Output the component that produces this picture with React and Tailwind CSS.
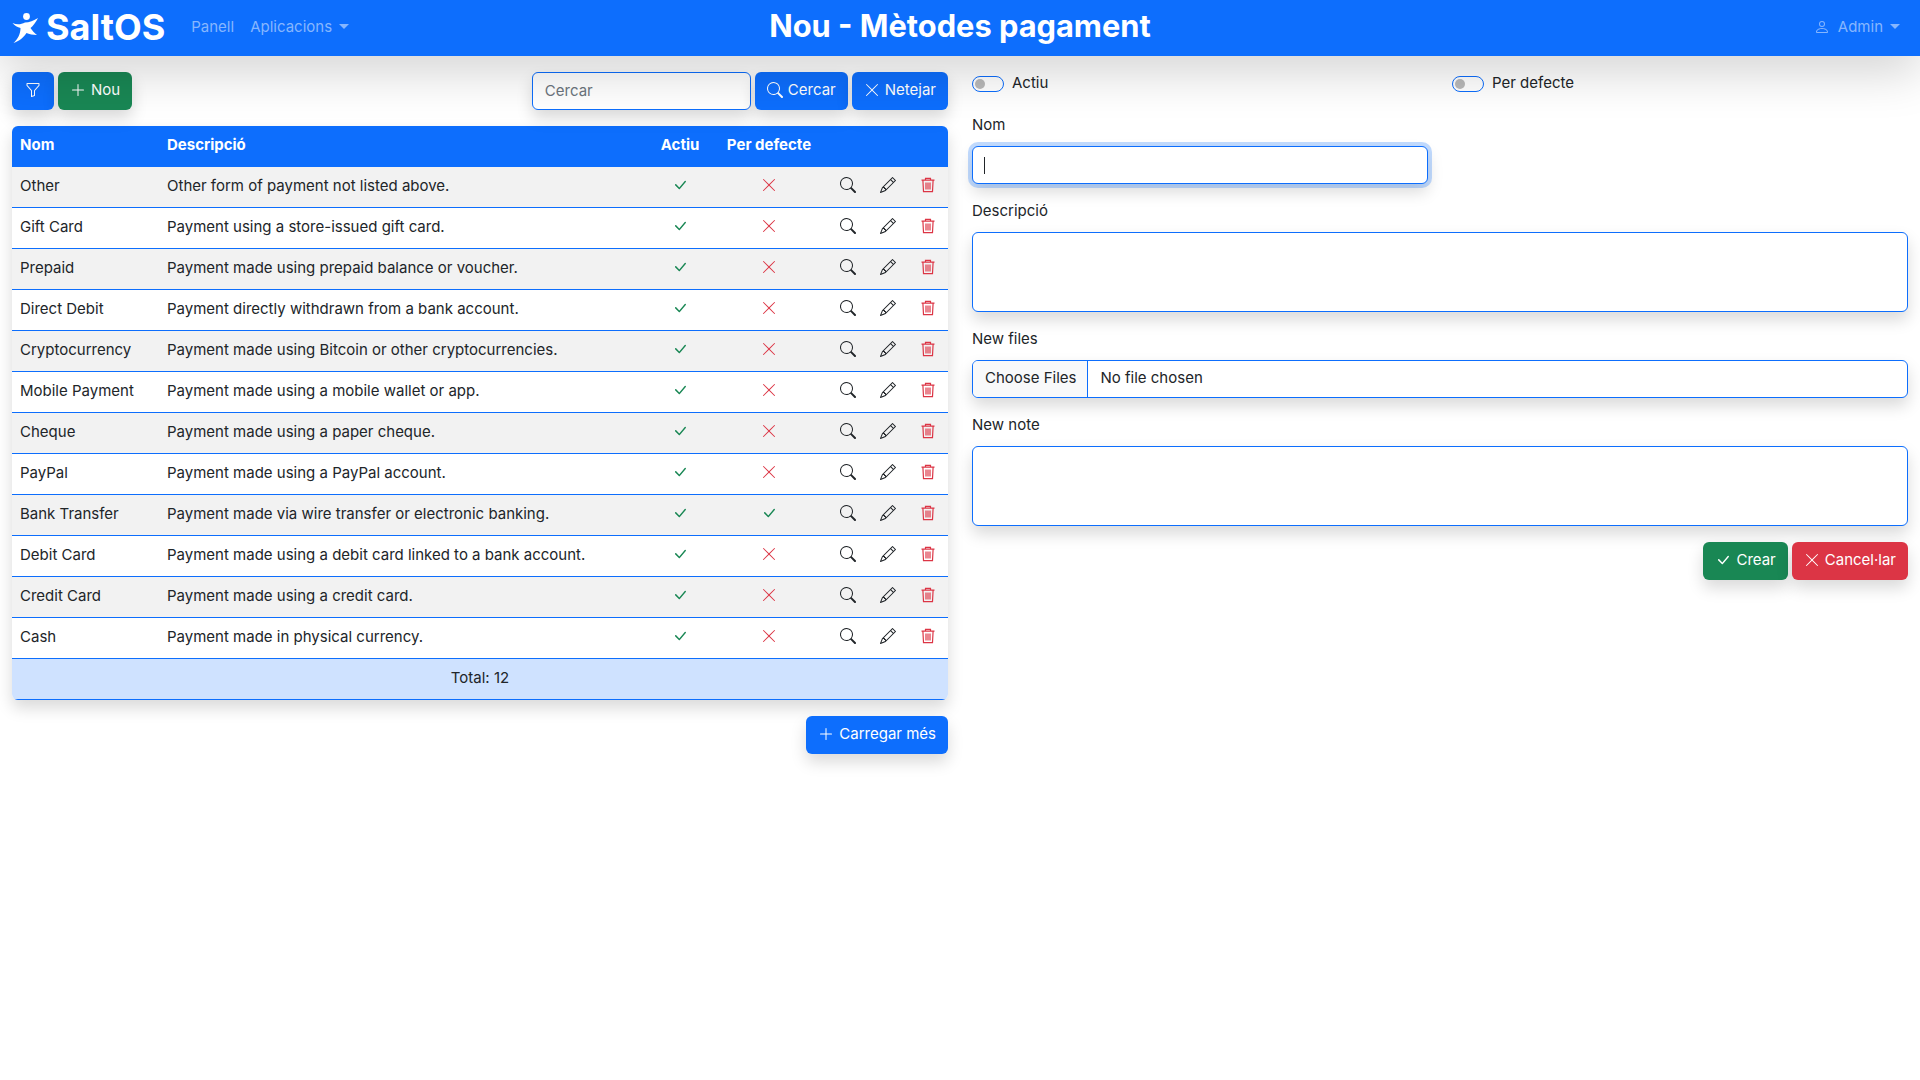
import React from 'react';
import { BsFunnel, BsPlusLg, BsSearch, BsXLg, BsCheckLg, BsPencil, BsPerson } from 'react-icons/bs';

const rows = [
  ['Other', 'Other form of payment not listed above.', false],
  ['Gift Card', 'Payment using a store-issued gift card.', false],
  ['Prepaid', 'Payment made using prepaid balance or voucher.', false],
  ['Direct Debit', 'Payment directly withdrawn from a bank account.', false],
  ['Cryptocurrency', 'Payment made using Bitcoin or other cryptocurrencies.', false],
  ['Mobile Payment', 'Payment made using a mobile wallet or app.', false],
  ['Cheque', 'Payment made using a paper cheque.', false],
  ['PayPal', 'Payment made using a PayPal account.', false],
  ['Bank Transfer', 'Payment made via wire transfer or electronic banking.', true],
  ['Debit Card', 'Payment made using a debit card linked to a bank account.', false],
  ['Credit Card', 'Payment made using a credit card.', false],
  ['Cash', 'Payment made in physical currency.', false],
];

const shadow = 'shadow-[0_8px_16px_rgba(0,0,0,0.15)]';
const btn = `inline-flex items-center justify-center gap-[5px] h-[38px] px-3 pb-[2px] rounded-md text-white ${shadow}`;
const field = 'w-full rounded-md border border-[#0d6efd] bg-white';
const cell = 'h-[41px] pb-[3px] border-b border-[#0d6efd]';
const iconCell = 'h-[41px] pb-[5px] border-b border-[#0d6efd]';

const Logo = () => (
  <svg viewBox="12 12 28 32" className="w-[28px] h-[32px]" fill="#fff">
    <circle cx="26.5" cy="16.5" r="3.4" />
    <path d="M12.5 23 C17 25 21 24.5 25 22.5 C29 22.5 34 20.5 38 18 C36 22 33 26 30.5 28 C32 30.5 34.5 33 37 35 C33 35 29 34 26.5 33 C24 37 19 41.5 13.5 43 C18 39 20.5 34 20.5 28 C17.5 27.5 14.5 25.5 12.5 23 Z" />
  </svg>
);

const Trash = () => (
  <svg viewBox="0 0 16 16" className="block w-[16px] h-[16px] mx-auto text-[#dc3545]" fill="none" stroke="currentColor" strokeWidth="1.2">
    <path d="M1.5 3.2h13M5.5 3.2V1.4h5v1.8M2.9 3.2l.6 11.4h9l.6-11.4" />
    <path d="M6 5.5v7M8 5.5v7M10 5.5v7" />
  </svg>
);

const Toggle = ({ label }) => (
  <div className="flex items-center gap-2 h-[26px] pb-[2px]">
    <span className="flex items-center w-[32px] h-[16px] rounded-full border border-[#0d6efd] bg-white">
      <span className="w-[10px] h-[10px] ml-[2px] rounded-full bg-[#b9b9b9]"></span>
    </span>
    <span className="pb-[2px] text-[#212529]">{label}</span>
  </div>
);

const Label = ({ children }) => <label className="block h-[24px] mb-2 leading-[21px] text-[#212529]">{children}</label>;

export default function App() {
  return (
    <div className="min-h-screen bg-white text-[15px] leading-[24px] text-[#212529] font-['Inter',sans-serif]">
      <nav className="relative z-10 grid grid-cols-[1fr_auto_1fr] items-center h-[56px] px-3 bg-[#0d6efd] shadow-[0_16px_48px_rgba(0,0,0,0.175)]">
        <div className="flex items-center">
          <Logo />
          <span className="ml-[6px] pb-[3px] text-[36px] leading-[44px] font-bold text-white">SaltOS</span>
          <span className="ml-[26px] pb-[3px] text-[#86b6fe]">Panell</span>
          <span className="ml-4 pb-[3px] flex items-center gap-[7px] text-[#86b6fe]">
            Aplicacions
            <span className="w-0 h-0 border-x-[5px] border-x-transparent border-t-[5px] border-t-[#86b6fe]"></span>
          </span>
        </div>
        <h1 className="pb-[4px] text-[30.8px] leading-[34px] font-bold text-white">Nou - Mètodes pagament</h1>
        <div className="flex items-center justify-end gap-2 pr-2 pb-[3px] text-[#86b6fe]">
          <BsPerson size={16} />
          <span className="mr-[-1px]">Admin</span>
          <span className="w-0 h-0 border-x-[5px] border-x-transparent border-t-[5px] border-t-[#86b6fe]"></span>
        </div>
      </nav>

      <main className="grid grid-cols-2 gap-6 px-3 pt-4">
        <section>
          <div className="flex items-center gap-1">
            <button className={`${btn} w-[42px] bg-[#0d6efd]`}><BsFunnel size={16} /></button>
            <button className={`${btn} bg-[#198754]`}><BsPlusLg size={16} />Nou</button>
            <input
              placeholder="Cercar"
              className={`ml-auto h-[38px] w-[219px] px-3 pb-[2px] rounded-md border border-[#0d6efd] bg-white placeholder:text-[#6c757d] ${shadow}`}
            />
            <button className={`${btn} bg-[#0d6efd]`}><BsSearch size={16} />Cercar</button>
            <button className={`${btn} bg-[#0d6efd]`}><BsXLg size={16} />Netejar</button>
          </div>

          <div className={`mt-4 rounded-md overflow-hidden ${shadow}`}>
            <table className="w-full table-fixed border-separate border-spacing-0">
              <colgroup>
                <col className="w-[147px]" />
                <col />
                <col className="w-[60px]" />
                <col className="w-[118px]" />
                <col className="w-[40px]" />
                <col className="w-[40px]" />
                <col className="w-[40px]" />
              </colgroup>
              <thead>
                <tr className="bg-[#0d6efd] text-white font-bold">
                  <th className="h-[41px] pb-[3px] px-2 text-left">Nom</th>
                  <th className="h-[41px] pb-[3px] px-2 text-left">Descripció</th>
                  <th className="h-[41px] pb-[3px] text-center">Actiu</th>
                  <th className="h-[41px] pb-[3px] text-center">Per defecte</th>
                  <th></th>
                  <th></th>
                  <th></th>
                </tr>
              </thead>
              <tbody>
                {rows.map(([name, desc, def], i) => (
                  <tr key={name} className={i % 2 === 0 ? 'bg-[#f2f2f2]' : 'bg-white'}>
                    <td className={`${cell} px-2`}>{name}</td>
                    <td className={`${cell} px-2 whitespace-nowrap`}>{desc}</td>
                    <td className={iconCell}><BsCheckLg size={16} className="mx-auto text-[#198754]" /></td>
                    <td className={iconCell}>
                      {def
                        ? <BsCheckLg size={16} className="mx-auto text-[#198754]" />
                        : <BsXLg size={16} className="mx-auto text-[#dc3545]" />}
                    </td>
                    <td className={iconCell}><BsSearch size={16} className="mx-auto" /></td>
                    <td className={iconCell}><BsPencil size={16} className="mx-auto" /></td>
                    <td className={iconCell}><Trash /></td>
                  </tr>
                ))}
              </tbody>
              <tfoot>
                <tr className="bg-[#cfe2ff]">
                  <td colSpan={7} className={`${cell} text-center`}>Total: 12</td>
                </tr>
              </tfoot>
            </table>
          </div>

          <div className="flex justify-end mt-4">
            <button className={`${btn} bg-[#0d6efd]`}><BsPlusLg size={16} />Carregar més</button>
          </div>
        </section>

        <section>
          <div className="grid grid-cols-2 gap-6 mb-4">
            <Toggle label="Actiu" />
            <Toggle label="Per defecte" />
          </div>

          <div className="grid grid-cols-2 gap-6 mb-4">
            <div>
              <Label>Nom</Label>
              <div className="relative">
                <input className={`block h-[38px] px-3 ${field} shadow-[0_0_0_4px_rgba(13,110,253,0.25),0_8px_16px_rgba(0,0,0,0.15)]`} />
                <span className="absolute left-[12px] top-[11px] w-px h-[17px] bg-[#212529]"></span>
              </div>
            </div>
          </div>

          <Label>Descripció</Label>
          <textarea className={`block h-[80px] mb-4 resize-none ${field} ${shadow}`}></textarea>

          <Label>New files</Label>
          <input
            type="file"
            multiple
            className={`block h-[38px] mb-4 overflow-hidden ${field} ${shadow} file:h-[36px] file:mr-3 file:pl-3 file:pr-[11px] file:pb-[2px] file:border-0 file:border-r file:border-solid file:border-[#0d6efd] file:bg-[#f8f9fa] file:text-[#212529]`}
          />

          <Label>New note</Label>
          <textarea className={`block h-[80px] mb-4 resize-none ${field} ${shadow}`}></textarea>

          <div className="flex justify-end gap-1">
            <button className={`${btn} bg-[#198754]`}><BsCheckLg size={16} />Crear</button>
            <button className={`${btn} bg-[#dc3545]`}><BsXLg size={16} />Cancel·lar</button>
          </div>
        </section>
      </main>
    </div>
  );
}
